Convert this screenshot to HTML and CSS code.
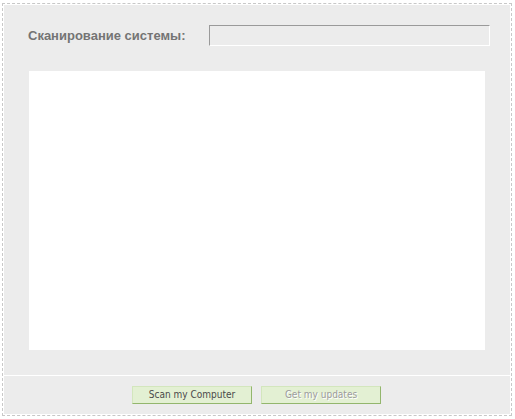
FILE: index.html
```html
<!DOCTYPE html>
<html lang="ru">

<head>
    <meta charset="UTF-8">
    <meta name="viewport" content="width=device-width, initial-scale=1.0">
    <title>Сканирование системы</title>
    <link rel="stylesheet" href="styles.css">
</head>

<body>
    <div class="frame">
        <div class="scanner">
            <div class="scan-header">
                <div class="scan-title">Сканирование системы:</div>
                <div class="scan-progress"></div>
            </div>

            <div class="scan-log"></div>

            <div class="scan-actions">
                <button class="btn" type="button">Scan my Computer</button>
                <button class="btn btn-disabled" type="button" disabled>Get my updates</button>
            </div>
        </div>
    </div>
</body>

</html>
```

FILE: styles.css
```css
:root {
    --panel-bg: #ececec;
    --btn-bg: #e3f0d3;
    --btn-light: #d3e6bd;
    --btn-dark: #93b66d;
}

html,
body {
    margin: 0;
    padding: 0;
    background-color: #ffffff;
}

body {
    padding: 3px 3px 3px 2px;
    font-family: "Liberation Sans", Arial, sans-serif;
}

.frame {
    border: 1px dashed #c8c8c8;
    padding: 1px;
    height: 409px;
}

.scanner {
    background-color: var(--panel-bg);
    height: 100%;
    display: flex;
    flex-direction: column;
}

.scan-header {
    display: flex;
    align-items: center;
    justify-content: space-between;
    padding: 20px 20px 0 24px;
}

.scan-title {
    font-size: 13px;
    font-weight: bold;
    color: #747474;
    padding-bottom: 1px;
}

.scan-progress {
    width: 279px;
    height: 19px;
    border: 1px solid;
    border-color: #9a9a9a #ffffff #ffffff #9a9a9a;
    background-color: var(--panel-bg);
}

.scan-log {
    background-color: #ffffff;
    margin: 25px 25px 0 25px;
    height: 279px;
}

.scan-actions {
    margin-top: 25px;
    border-top: 1px solid #ffffff;
    display: flex;
    justify-content: center;
    gap: 9px;
    padding: 10px 1px 0 0;
}

.btn {
    box-sizing: border-box;
    width: 120px;
    height: 18px;
    margin: 0;
    padding: 0;
    border: 1px solid;
    border-color: var(--btn-light) var(--btn-dark) var(--btn-dark) var(--btn-light);
    background-color: var(--btn-bg);
    font-family: "DejaVu Sans Condensed", "DejaVu Sans", Verdana, sans-serif;
    font-stretch: condensed;
    font-size: 10px;
    color: #4a4a4a;
    line-height: 16px;
}

.btn-disabled {
    color: #9c9c9c;
    text-shadow: 1px 1px 0 #ffffff;
}
```
